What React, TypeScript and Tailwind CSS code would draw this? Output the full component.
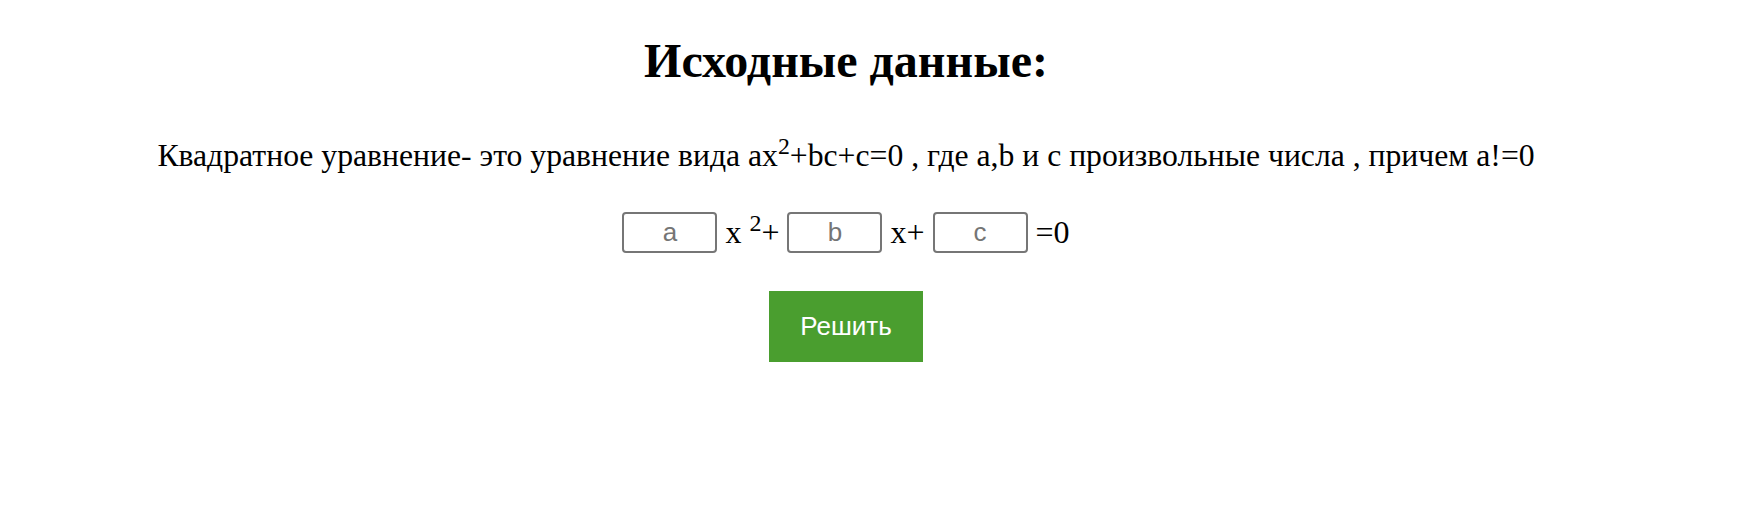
import React, { useState } from 'react';

const serif = { fontFamily: '"Liberation Serif", "Times New Roman", serif' };

const CoefInput: React.FC<{ placeholder: string; value: string; onChange: (v: string) => void }> = ({ placeholder, value, onChange }) => (
  <input
    type="text"
    value={value}
    placeholder={placeholder}
    onChange={e => onChange(e.target.value)}
    className="w-[95px] h-[41px] border-2 border-[#767676] rounded-[4px] bg-white text-center text-[26px] text-black placeholder:text-[#757575] outline-none font-['Liberation_Sans',Arial,sans-serif] align-middle"
  />
);

export default function App() {
  const [a, setA] = useState('');
  const [b, setB] = useState('');
  const [c, setC] = useState('');

  return (
    <div className="w-[1752px] h-[522px] bg-white text-black">
      <div className="w-[1692px] flex flex-col items-center" style={serif}>
        <h2 className="mt-[33px] text-[48px] leading-[55px] font-bold">Исходные данные:</h2>

        <p className="mt-[49px] text-[31.7px] leading-[37px]">
          Квадратное уравнение- это уравнение вида ax<sup>2</sup>+bc+c=0 , где a,b и c произвольные числа , причем a!=0
        </p>

        <div className="mt-[38px] flex items-center text-[32px] leading-[37px]">
          <CoefInput placeholder="a" value={a} onChange={setA} />
          <span className="ml-[8px] whitespace-pre">x <sup>2</sup>+ </span>
          <CoefInput placeholder="b" value={b} onChange={setB} />
          <span className="ml-[8px] whitespace-pre">x+ </span>
          <CoefInput placeholder="c" value={c} onChange={setC} />
          <span className="ml-[8px]">=0</span>
        </div>

        <button className="mt-[38px] w-[154px] h-[71px] bg-[#4a9e2f] text-white text-[26px] font-['Liberation_Sans',Arial,sans-serif]">
          Решить
        </button>
      </div>
    </div>
  );
}
